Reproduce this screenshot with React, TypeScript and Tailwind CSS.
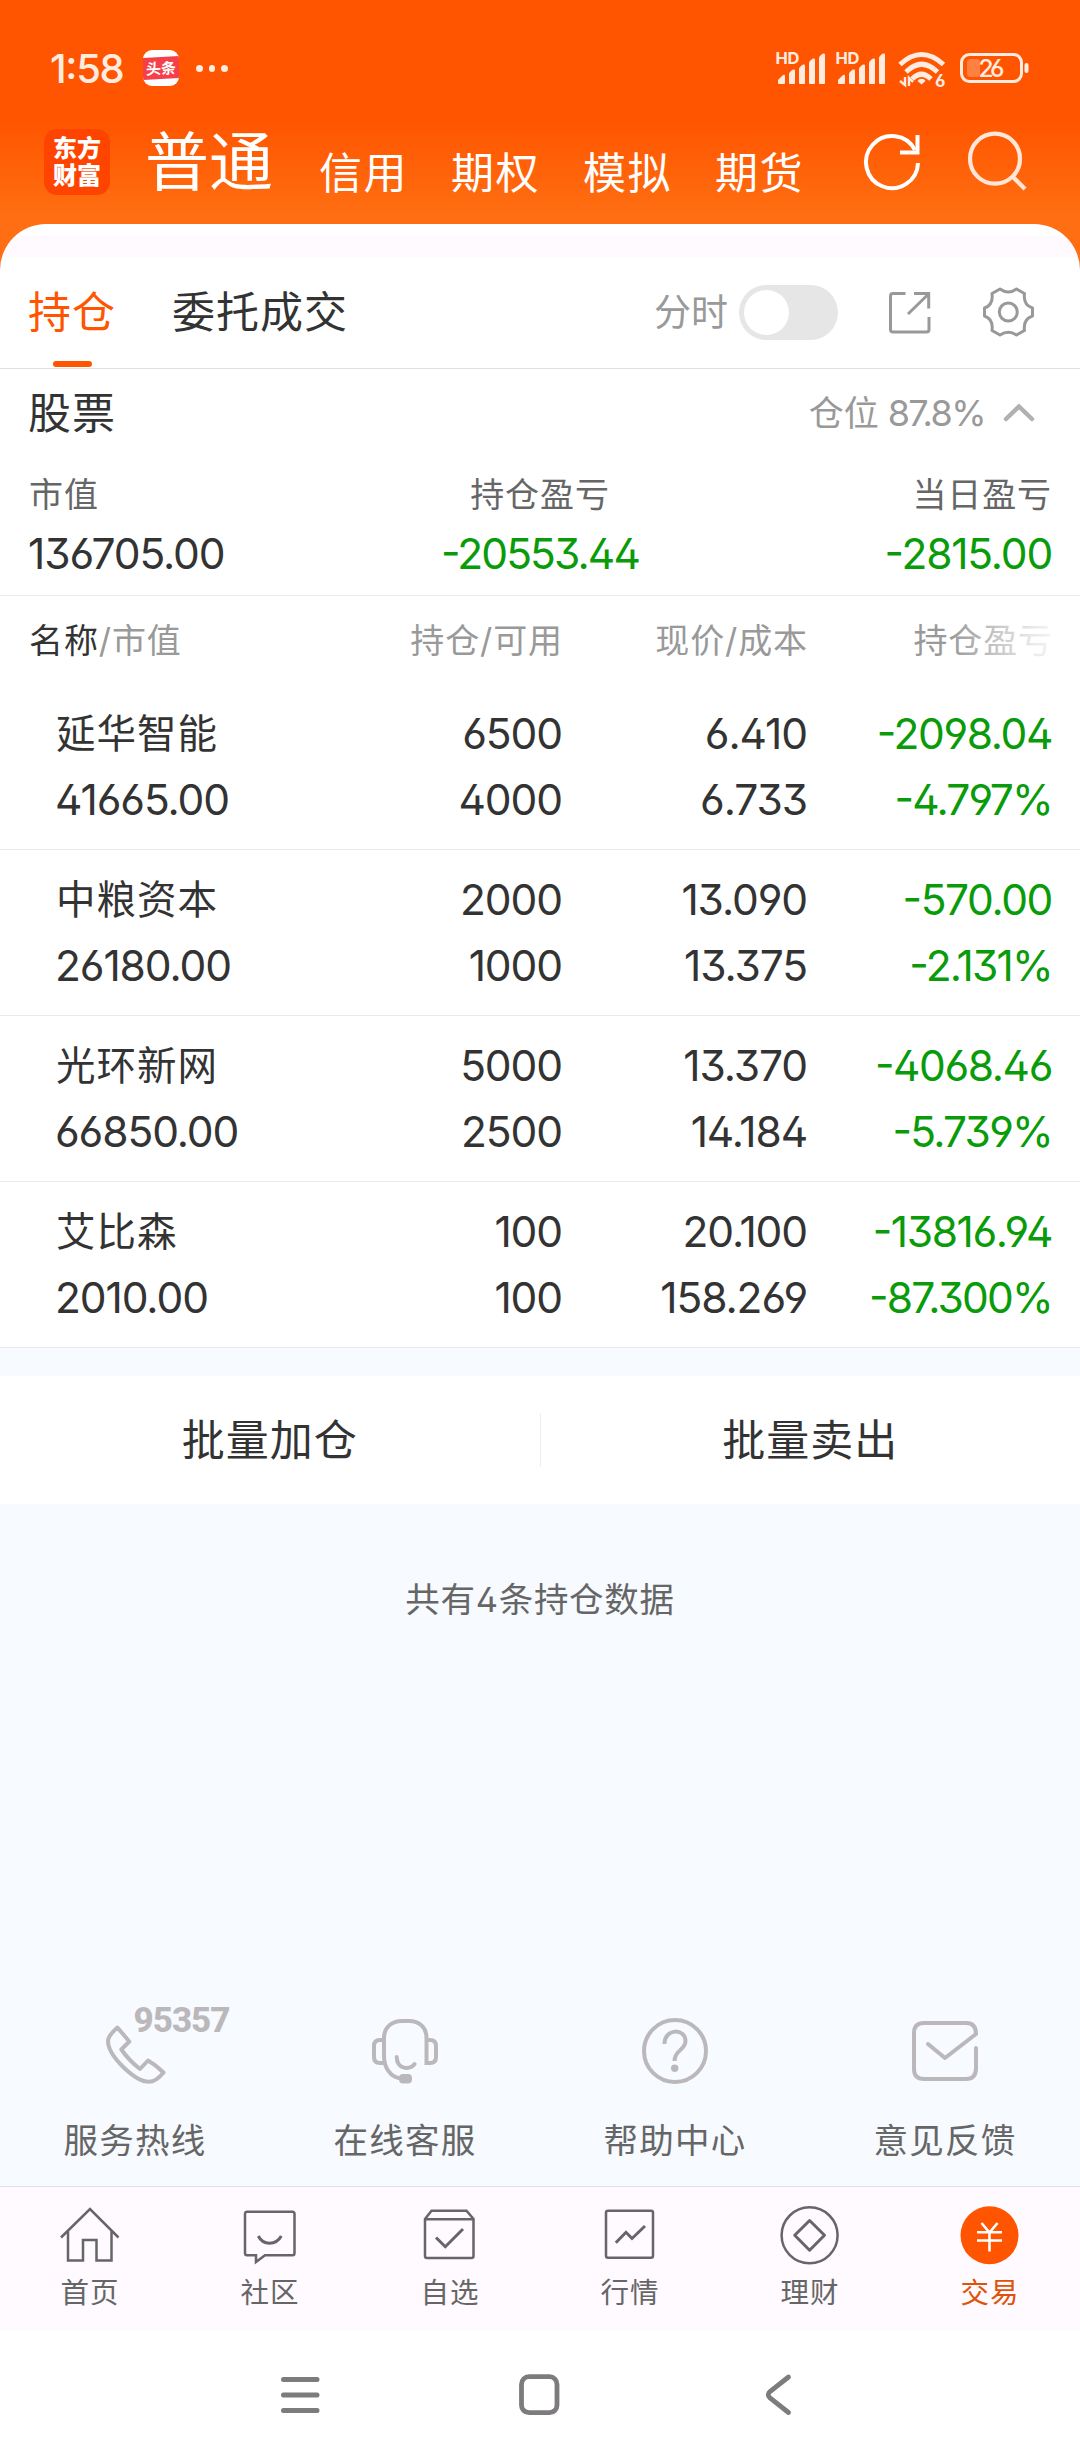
import React from "react";

const FONT = "font-['Inter','Noto_Sans_CJK_SC',sans-serif]";

type Holding = {
  name: string;
  value: string;
  total: string;
  available: string;
  price: string;
  cost: string;
  profit: string;
  ratio: string;
};

const holdings: Holding[] = [
  { name: "延华智能", value: "41665.00", total: "6500", available: "4000", price: "6.410", cost: "6.733", profit: "-2098.04", ratio: "-4.797%" },
  { name: "中粮资本", value: "26180.00", total: "2000", available: "1000", price: "13.090", cost: "13.375", profit: "-570.00", ratio: "-2.131%" },
  { name: "光环新网", value: "66850.00", total: "5000", available: "2500", price: "13.370", cost: "14.184", profit: "-4068.46", ratio: "-5.739%" },
  { name: "艾比森", value: "2010.00", total: "100", available: "100", price: "20.100", cost: "158.269", profit: "-13816.94", ratio: "-87.300%" },
];

function SignalBars() {
  return (
    <svg className="h-[36px] w-[60px] overflow-visible" viewBox="0 0 60 36" fill="#ffece0">
      <text x="-0.5" y="14.500" fontSize="16.5" fontWeight="700" fontFamily="Inter" textLength="24">HD</text>
      <path d="M2 34v-3l5-5q2-1 2 1v7q0 1-1 1h-5q-1 0-1-1z" />
      <path d="M13 34v-9q0-2 4-4.500q2-.5 2 1v12.500q0 1-1 1h-4q-1 0-1-1z" />
      <path d="M23 34v-14q0-2 4-4.500q2-.5 2 1v17.500q0 1-1 1h-4q-1 0-1-1z" />
      <path d="M33 34v-20q0-2 4-4.500q2-.5 2 1v23.500q0 1-1 1h-4q-1 0-1-1z" />
      <path d="M43 34v-25q0-2 4-4.500q2-.5 2 1v28.500q0 1-1 1h-4q-1 0-1-1z" />
    </svg>
  );
}

function StatusBar() {
  return (
    <div className="flex h-[120px] items-start pt-[48px]">
      <div className="ml-[50px] w-[93px] text-[40px] leading-[41px] font-medium tracking-[-1.300px] text-[#ffece0]">1:58</div>
      <div className="mt-[2px] flex h-9 w-9 items-center overflow-hidden rounded-[9px] bg-white">
        <div className="flex h-[22px] w-full -skew-y-3 items-center justify-center bg-[#f5404a] text-[15px] leading-none font-bold whitespace-nowrap text-white">头条</div>
      </div>
      <div className="mt-[17px] ml-[17px] flex gap-[6px]">
        <i className="h-[6.500px] w-[6.500px] rounded-full bg-[#ffece0]" />
        <i className="h-[6.500px] w-[6.500px] rounded-full bg-[#ffece0]" />
        <i className="h-[6.500px] w-[6.500px] rounded-full bg-[#ffece0]" />
      </div>
      <div className="mt-[1px] mr-[50px] ml-auto flex">
        <SignalBars />
        <SignalBars />
        <svg className="h-[40px] w-[60px]" viewBox="896 49 60 40" fill="none" stroke="#ffece0" strokeWidth="5">
          <path d="M900 64.500Q921.500 44.500 943.500 64.500" />
          <path d="M906 72Q921.500 56.500 937.500 72" />
          <path d="M912 79Q921.500 69.500 931 79" />
          <path d="M917.500 81a4.300 3.400 0 0 1 8 0l-4 3.500z" fill="#ffece0" stroke="none" />
          <path d="M905 77v8l-5-4M909 86v-8l4 4" strokeWidth="2.400" />
          <text x="935" y="86.500" fontSize="17" fontWeight="700" fontFamily="Inter" fill="#ffece0" stroke="none">6</text>
        </svg>
        <svg className="mt-[2px] h-[34px] w-[74px]" viewBox="956 51 74 34">
          <rect x="961.500" y="54.500" width="60" height="27" rx="8" fill="none" stroke="#ffece0" strokeWidth="3" />
          <rect x="967" y="59" width="13" height="18" rx="3" fill="#ff8040" />
          <rect x="1024.500" y="63" width="4" height="10" rx="2" fill="#ffece0" />
          <text x="978.500" y="77.300" fontSize="24.500" fontWeight="500" fontFamily="Inter" fill="#ffece0" textLength="26">26</text>
        </svg>
      </div>
    </div>
  );
}

function AccountTabs() {
  return (
    <div className="flex h-[104px] items-start text-white">
      <div className="mt-[9px] ml-[44px] flex h-[66px] w-[66px] flex-col items-center justify-center rounded-[13px] bg-[#ff4400] text-[24px] leading-[27px] font-black">
        <span>东方</span>
        <span>财富</span>
      </div>
      <div className="mt-[7px] ml-[35px] w-[174px] text-[64px] leading-[70px]">普通</div>
      {["信用", "期权", "模拟", "期货"].map((label) => (
        <div key={label} className="mt-[28px] w-[132px] text-[43px] leading-[50px] tracking-[1.500px]">{label}</div>
      ))}
      <svg className="mt-[8px] ml-[13px] h-[70px] w-[64px]" viewBox="860 128 64 70" fill="none" stroke="white" strokeWidth="4">
        <path d="M918 163A26 26 0 1 1 915 150" />
        <path d="M900 152.500H917.500V135" />
      </svg>
      <svg className="mt-[8px] ml-[43px] h-[70px] w-[64px]" viewBox="967 128 64 70" fill="none" stroke="#ffe6d8" strokeWidth="4.200">
        <circle cx="995" cy="158.700" r="25" />
        <path d="M1012 176L1025 189" />
      </svg>
    </div>
  );
}

function ViewTabs() {
  return (
    <div className="flex h-[145px] items-center rounded-t-[46px] border-b border-[#e0e0e0] bg-[linear-gradient(#ffffff_12px,#fefaff_12px,#fefaff_33px,#ffffff_33px)] text-[#333]">
      <div className="relative mt-[31px] ml-[28px] w-[144px] text-[43px] leading-[60px] tracking-[1px] text-[#ff5500]">
        持仓
        <span className="absolute top-[79px] left-[25px] h-[6px] w-[39px] rounded-full bg-[#ff5500]" />
      </div>
      <div className="mt-[31px] text-[43px] leading-[60px] tracking-[1px]">委托成交</div>
      <div className="mt-[33px] mr-[11px] ml-auto text-[37px] leading-[60px] text-[#999]">分时</div>
      <div className="mt-[32px] flex h-[55px] w-[99px] items-center rounded-full bg-[#e6e6e7] pl-[5px]">
        <div className="h-[45px] w-[45px] rounded-full bg-white" />
      </div>
      <svg className="mt-[33px] ml-[49px] h-[46px] w-[46px]" viewBox="887 290 46 46" fill="none" stroke="#999" strokeWidth="3">
        <path d="M905.500 293.500H893Q890.500 293.500 890.500 296V329.500Q890.500 332 893 332H926.500Q929 332 929 329.500V317" />
        <path d="M914 293.500H928.700V308.500M928 294.500L908 314" />
      </svg>
      <svg className="mt-[32px] mr-[42px] ml-[47px] h-[56px] w-[58px]" viewBox="980 285 58 56" fill="none" stroke="#999" strokeWidth="3" strokeLinejoin="round">
        <path d="M1000 290Q1008.300 296 1016.500 290L1024.500 294.500Q1023 306 1032.500 309V317Q1023 320 1024.500 331.500L1016.500 336Q1008.300 330.500 1000 336L992 331.500Q993.500 320 984.500 317V309Q993.500 306 992 294.500Z" />
        <circle cx="1008.300" cy="313" r="9" />
      </svg>
    </div>
  );
}

function Summary() {
  return (
    <section className="h-[227px] border-b border-[#ebebeb]">
      <div className="flex h-[88px] items-center pr-[44px] pl-[28px]">
        <h2 className="text-[43px] tracking-[1px] text-[#333]">股票</h2>
        <span className="ml-auto text-[35px] text-[#999]">仓位</span>
        <span className="ml-[9px] text-[36px] tracking-[-1.600px] text-[#999]">87.8%</span>
        <svg className="ml-[17px] h-[20px] w-[34px]" viewBox="0 0 34 20" fill="none" stroke="#b3b0b3" strokeWidth="4.500" strokeLinecap="round">
          <path d="M4 16L17 3.500L30 16" />
        </svg>
      </div>
      <div className="grid grid-cols-3 px-[28px] text-[34px] leading-[76px] tracking-[0.900px] text-[#666]">
        <div className="pl-[1px] text-left">市值</div>
        <div className="text-center">持仓盈亏</div>
        <div className="text-right">当日盈亏</div>
      </div>
      <div className="grid grid-cols-3 px-[28px] text-[42.500px] leading-[42px] text-[#099b09]">
        <div className="text-left tracking-[-1.100px] text-[#333]">136705.00</div>
        <div className="text-center tracking-[-1.900px]">-20553.44</div>
        <div className="text-right tracking-[-1.200px]">-2815.00</div>
      </div>
    </section>
  );
}

function HoldingsTable() {
  return (
    <section>
      <div className="relative grid h-[88px] grid-cols-[318px_245px_245px_245px] items-center text-right text-[34px] tracking-[0.900px] text-[#999]">
        <div className="pl-[29px] text-left"><span className="text-[#333]">名称</span>/市值</div>
        <div>持仓/可用</div>
        <div>现价/成本</div>
        <div>持仓盈亏</div>
        <div className="absolute top-0 right-0 h-full w-[130px] bg-gradient-to-r from-white/0 via-white/80 via-65% to-white" />
      </div>
      {holdings.map((h) => (
        <div key={h.name} className="grid h-[166px] grid-cols-[318px_244px_245px_245px] grid-rows-[66px_66px] border-b border-[#ebebeb] pt-[17px] text-right text-[42.500px] leading-[66px] tracking-[-1.100px] text-[#333]">
          <div className="pl-[56px] text-left text-[39.500px] tracking-[1px]">{h.name}</div>
          <div>{h.total}</div>
          <div>{h.price}</div>
          <div className="tracking-[-1.400px] text-[#099b09]">{h.profit}</div>
          <div className="pl-[55px] text-left">{h.value}</div>
          <div>{h.available}</div>
          <div>{h.cost}</div>
          <div className="tracking-[-1.800px] text-[#099b09]">{h.ratio}</div>
        </div>
      ))}
    </section>
  );
}

const icon = "h-[80px] w-[130px] overflow-visible";

function Services() {
  const items = [
    {
      label: "服务热线",
      art: (
        <svg className={icon} viewBox="105 2006 130 80" fill="none" stroke="#bbb8bb" strokeWidth="4" strokeLinejoin="round">
          <path d="M117.400 2027.500L129.300 2041.500L121.300 2049.500Q129 2060.500 140 2069L148 2060.500Q156 2065 163.500 2072.500Q156 2081.800 149 2081.800C135 2081.800 108 2056 108 2041Q108 2036 117.400 2027.500Z" />
          <text x="133.500" y="2032" fontSize="35" fontWeight="800" fontFamily="Roboto" fill="#bbb8bb" stroke="none" textLength="97">95357</text>
        </svg>
      ),
      pad: "pl-[70px]",
    },
    {
      label: "在线客服",
      art: (
        <svg className={icon} viewBox="340 2006 130 80" fill="none" stroke="#bbb8bb" strokeWidth="4" strokeLinecap="round">
          <path d="M402 2078.500C390 2078 384 2067 384 2056V2038C384 2027 392 2021 402 2021H409C419 2021 426.500 2027 426.500 2038V2063H430Q436 2063 436 2057V2046Q436 2040 430 2040H427" />
          <path d="M384 2040H380Q374 2040 374 2046V2057Q374 2063 380 2063H384M396.700 2057C397 2070 410 2070 414.600 2064" />
          <rect x="399" y="2074" width="13" height="9.500" rx="4" fill="#bbb8bb" stroke="none" />
        </svg>
      ),
      pad: "",
    },
    {
      label: "帮助中心",
      art: (
        <svg className={icon} viewBox="610 2006 130 80" fill="none" stroke="#bbb8bb" strokeWidth="4">
          <circle cx="675" cy="2051" r="31" />
          <path d="M664.500 2044C664.500 2028 685.500 2028 685.500 2041C685.500 2050 674.500 2050 674.500 2061" />
          <circle cx="674.700" cy="2068.300" r="3.700" fill="#bbb8bb" stroke="none" />
        </svg>
      ),
      pad: "",
    },
    {
      label: "意见反馈",
      art: (
        <svg className={icon} viewBox="880 2006 130 80" fill="none" stroke="#bbb8bb" strokeWidth="4" strokeLinecap="round" strokeLinejoin="round">
          <path d="M976 2048V2068Q976 2079 966 2079H924Q914 2079 914 2069V2033Q914 2023 924 2023H966Q976 2023 976 2034L945 2058L928 2044" />
        </svg>
      ),
      pad: "",
    },
  ];
  return (
    <div className="grid h-[182px] grid-cols-4 pt-[2px]">
      {items.map((it) => (
        <div key={it.label} className="flex flex-col items-center">
          <div className={it.pad}>{it.art}</div>
          <div className="mt-[25px] text-[34.500px] leading-[60px] tracking-[1.300px] text-[#666]">{it.label}</div>
        </div>
      ))}
    </div>
  );
}

const navIcon = "h-[64px] w-[64px]";

function TabBar() {
  const items = [
    {
      label: "首页",
      art: (
        <svg className={navIcon} viewBox="58 2203 64 64" fill="none" stroke="#666" strokeWidth="2.500">
          <path d="M61 2237.500L90 2209L118.500 2237.500M68 2231V2260.500H83V2240H96.500V2260.500H111.500V2231" />
        </svg>
      ),
    },
    {
      label: "社区",
      art: (
        <svg className={navIcon} viewBox="238 2203 64 64" fill="none" stroke="#666" strokeWidth="2.500">
          <path d="M247 2211.700H292.500Q294.500 2211.700 294.500 2214V2253Q294.500 2255.300 292.500 2255.300H265L256 2262V2255.300H247Q245 2255.300 245 2253V2214Q245 2211.700 247 2211.700Z" />
          <path d="M258.300 2236C263 2245.500 276 2245.500 281.300 2236" strokeWidth="3" />
        </svg>
      ),
    },
    {
      label: "自选",
      art: (
        <svg className={navIcon} viewBox="418 2203 64 64" fill="none" stroke="#666" strokeWidth="2.500">
          <path d="M425 2219L431.500 2210.700H466.500L473.500 2219V2256Q473.500 2258 471.500 2258H427Q425 2258 425 2256ZM425 2219.300H473.500" />
          <path d="M436 2237.500L445.300 2246.700L463 2229" strokeWidth="3" />
        </svg>
      ),
    },
    {
      label: "行情",
      art: (
        <svg className={navIcon} viewBox="598 2203 64 64" fill="none" stroke="#666" strokeWidth="2.500">
          <rect x="606" y="2210.700" width="47" height="47" rx="2" />
          <path d="M615.800 2242.700L626 2232.300L632 2238.500L645 2226" strokeWidth="3" />
        </svg>
      ),
    },
    {
      label: "理财",
      art: (
        <svg className={navIcon} viewBox="778 2203 64 64" fill="none" stroke="#666" strokeWidth="2.500" strokeLinejoin="round">
          <circle cx="809.600" cy="2235.300" r="28" />
          <path d="M809.600 2220.500L824.500 2235.300L809.600 2250.200L794.700 2235.300Z" strokeWidth="3" />
        </svg>
      ),
    },
    {
      label: "交易",
      art: (
        <svg className={navIcon} viewBox="958 2203 64 64" fill="none" stroke="#fff" strokeWidth="2.600">
          <circle cx="989.500" cy="2235.300" r="29" fill="#ff5500" stroke="none" />
          <path d="M981.500 2223L989.500 2232.500L997.500 2223M989.500 2232V2251.500M977 2232.300H1002M977 2240.500H1002" />
        </svg>
      ),
    },
  ];
  return (
    <nav className="grid h-[144px] grid-cols-6 border-t border-[#e2e2e6] bg-[#fefaff] pt-[16px] text-[#666]">
      {items.map((it) => (
        <div key={it.label} className="flex flex-col items-center last:text-[#e05207]">
          {it.art}
          <div className="mt-[6px] text-[28.500px] leading-[40px] tracking-[1px]">{it.label}</div>
        </div>
      ))}
    </nav>
  );
}

function SystemNav() {
  return (
    <div className="flex h-[130px] items-center justify-center gap-[180px] bg-white">
      <svg className="h-[60px] w-[60px]" viewBox="270 2365 60 60" stroke="#7d7b7d" strokeWidth="5" strokeLinecap="round">
        <path d="M283.500 2379.500H317M283.500 2395H317M283.500 2410.500H317" />
      </svg>
      <svg className="h-[60px] w-[60px]" viewBox="510 2365 60 60" fill="none" stroke="#7d7b7d" strokeWidth="4.800">
        <rect x="521.500" y="2376.700" width="35.500" height="36" rx="7.500" />
      </svg>
      <svg className="h-[60px] w-[60px]" viewBox="750 2365 60 60" fill="none" stroke="#7d7b7d" strokeWidth="4.800" strokeLinecap="round">
        <path d="M788.500 2377L770 2391.500Q766.500 2394.700 770 2398L788.500 2412.500" />
      </svg>
    </div>
  );
}

export default function App() {
  return (
    <div className={`${FONT} flex h-[2460px] w-[1080px] flex-col overflow-hidden bg-[#f7faff] [font-feature-settings:'case','ss01']`}>
      <header className="bg-[linear-gradient(#ff5500_120px,#ff6e12_215px,#ff6e12)]">
        <StatusBar />
        <AccountTabs />
        <ViewTabs />
      </header>
      <main className="flex flex-1 flex-col">
        <div className="bg-white">
          <Summary />
          <HoldingsTable />
        </div>
        <div className="mt-[28px] flex h-[128px] items-center bg-white text-[43px] tracking-[1px] text-[#333]">
          <div className="flex-1 text-center">批量加仓</div>
          <div className="h-[54px] w-px bg-[#eee]" />
          <div className="flex-1 text-center">批量卖出</div>
        </div>
        <p className="mt-[66px] text-center text-[34.500px] leading-[60px] tracking-[0.700px] text-[#666]">共有4条持仓数据</p>
        <div className="mt-auto">
          <Services />
        </div>
      </main>
      <TabBar />
      <SystemNav />
    </div>
  );
}
